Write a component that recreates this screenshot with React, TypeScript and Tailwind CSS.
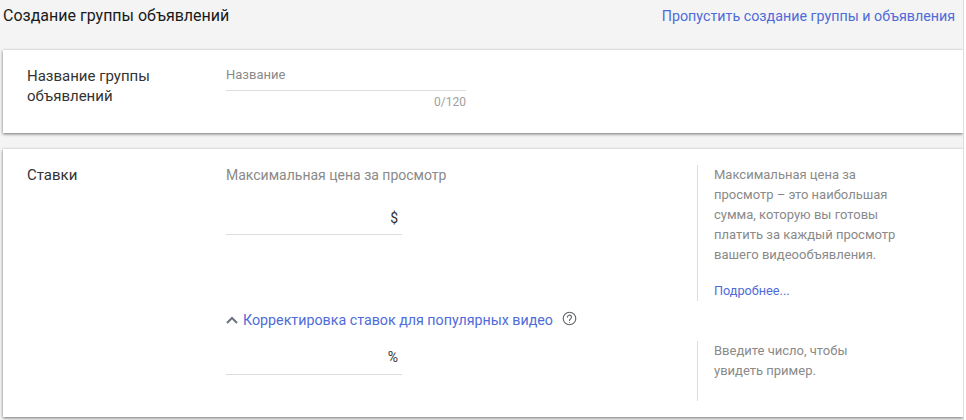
const roboto = "font-['Roboto',sans-serif]";

function QuestionIcon() {
  return (
    <svg width="15" height="15" viewBox="0 0 15 15" fill="none" stroke="#5f6368" strokeWidth="1.1">
      <circle cx="7.5" cy="7.5" r="6.3" />
      <path d="M5.5 6.1a2 2 0 1 1 3.2 1.6c-.7.5-1.2.9-1.2 1.8" strokeLinecap="round" />
      <circle cx="7.5" cy="11.2" r="0.5" fill="#5f6368" stroke="none" />
    </svg>
  );
}

function ChevronUp() {
  return (
    <svg width="12" height="8" viewBox="0 0 12 8" fill="none" stroke="#6b7280" strokeWidth="2">
      <path d="M1 7l5-5 5 5" />
    </svg>
  );
}

export default function App() {
  return (
    <div className={`${roboto} flex w-[966px] h-[420px] overflow-hidden bg-[#f4f4f4]`}>
      <main className="w-[963px] shrink-0 pl-[3px]">
        {/* Header */}
        <div className="flex h-[50px] items-start justify-between pt-[6px] pr-[8px]">
          <h1 className="text-[16px] leading-[20px] font-normal text-[#1a1a1a]">Создание группы объявлений</h1>
          <a className="text-[14.27px] leading-[20px] text-[#4f6bd8]">Пропустить создание группы и объявления</a>
        </div>

        {/* Ad group name */}
        <section className="flex h-[83px] bg-white pl-[24px] shadow-[0_1px_3px_rgba(0,0,0,0.55)]">
          <div className="w-[199px] pt-[16px] text-[15px] leading-[20px] text-[#333333]">
            Название группы
            <br />
            объявлений
          </div>
          <div className="w-[240px] pt-[15px]">
            <div className="h-[26px] border-b border-[#dddddd] text-[13px] leading-[20px] text-[#8a8a8a]">Название</div>
            <div className="mt-[3px] text-right text-[12px] leading-[16px] text-[#a0a0a0]">0/120</div>
          </div>
        </section>

        {/* Bids */}
        <section className="mt-[16px] flex h-[268px] bg-white pl-[24px] shadow-[0_1px_3px_rgba(0,0,0,0.55)]">
          <div className="w-[199px] pt-[16px] text-[15px] leading-[20px] text-[#333333]">Ставки</div>
          <div className="flex flex-1 flex-col">
            <div className="flex h-[161px] pt-[16px]">
              <div className="w-[471px]">
                <div className="text-[14px] leading-[20px] text-[#8a8a8a]">Максимальная цена за просмотр</div>
                <div className="mt-[13px] flex h-[37px] w-[176px] justify-end border-b border-[#dddddd] pt-[10px] pr-[4px] text-[14px] leading-[20px] text-[#333333]">
                  $
                </div>
              </div>
              <div className="h-[136px] flex-1 border-l border-[#dddddd] pl-[16px] text-[13px] leading-[20px] text-[#8a8a8a]">
                <p>
                  Максимальная цена за
                  <br />
                  просмотр – это наибольшая
                  <br />
                  сумма, которую вы готовы
                  <br />
                  платить за каждый просмотр
                  <br />
                  вашего видеообъявления.
                </p>
                <a className="mt-[16px] block text-[12.7px] text-[#4f6bd8]">Подробнее...</a>
              </div>
            </div>
            <div className="flex">
              <div className="w-[471px]">
                <div className="flex h-[20px] items-center">
                  <ChevronUp />
                  <a className="ml-[5px] text-[14.25px] leading-[20px] text-[#4f6bd8]">Корректировка ставок для популярных видео</a>
                  <span className="-mt-[4px] ml-[9px]">
                    <QuestionIcon />
                  </span>
                </div>
                <div className="mt-[8px] flex h-[37px] w-[176px] justify-end border-b border-[#dddddd] pt-[9px] pr-[4px] text-[14px] leading-[20px] text-[#333333]">
                  %
                </div>
              </div>
              <div className="mt-[31px] h-[60px] flex-1 border-l border-[#dddddd] pl-[16px] text-[13px] leading-[20px] text-[#8a8a8a]">
                Введите число, чтобы
                <br />
                увидеть пример.
              </div>
            </div>
          </div>
        </section>
      </main>
      <div className="relative flex-1 border-l border-[#dddddd] bg-white" />
    </div>
  );
}
